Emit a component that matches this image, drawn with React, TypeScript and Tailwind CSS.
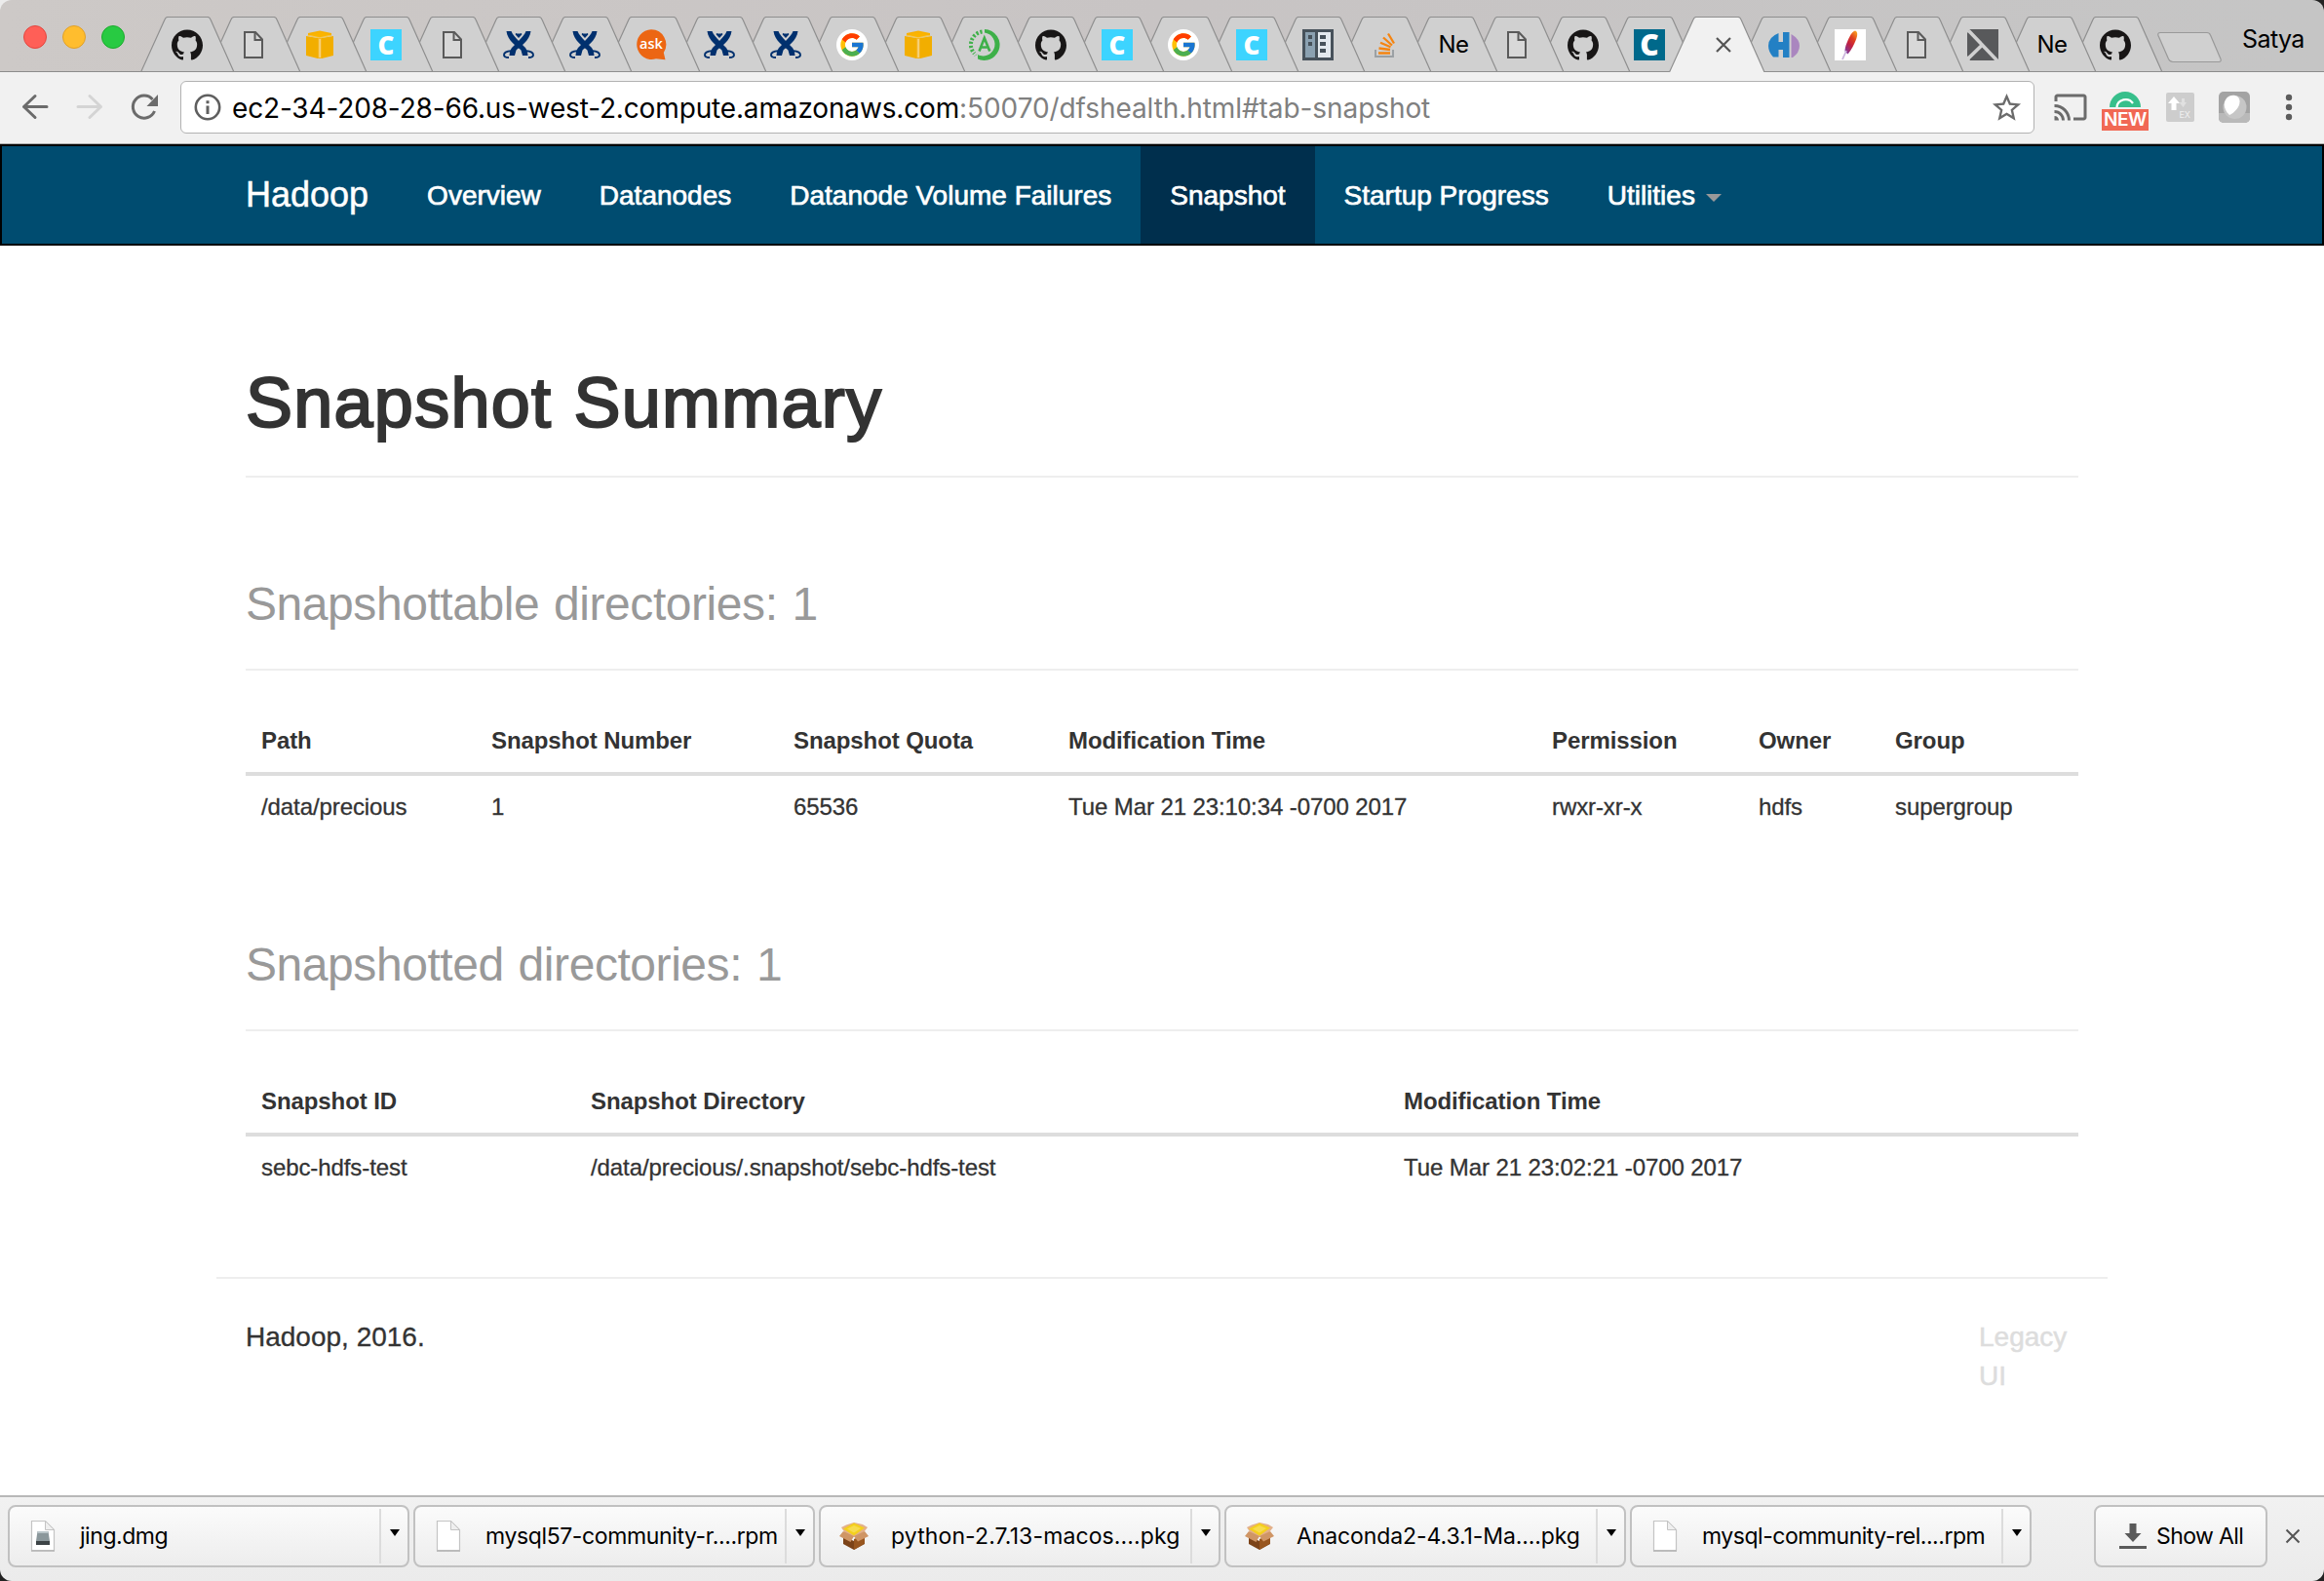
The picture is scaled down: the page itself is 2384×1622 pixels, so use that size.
import { type ReactNode } from "react";
import { SiGithub } from "react-icons/si";
import { FcGoogle } from "react-icons/fc";
import { MdCast, MdStarBorder } from "react-icons/md";

type TabKind =
  | "github" | "doc" | "aws" | "c" | "atlas" | "ask" | "google" | "ana" | "panel"
  | "stack" | "ne" | "cteal" | "active" | "hi" | "feather" | "cross";

const tabs: TabKind[] = [
  "github", "doc", "aws", "c", "doc", "atlas", "atlas", "ask", "atlas", "atlas",
  "google", "aws", "ana", "github", "c", "google", "c", "panel", "stack", "ne",
  "doc", "github", "cteal", "active", "hi", "feather", "doc", "cross", "ne", "github",
];

function Svg({ children }: { children: ReactNode }) {
  return (
    <svg viewBox="0 0 32 32" className="size-8">
      {children}
    </svg>
  );
}

function Favicon({ kind }: { kind: TabKind }) {
  switch (kind) {
    case "github":
      return <SiGithub className="size-8 text-[#181616]" />;
    case "doc":
      return (
        <Svg>
          <path d="M7 3h11l7 7.500v18.500H7z" fill="#d8d8d8" stroke="#5a5a5a" strokeWidth="2" />
          <path d="M17.500 3v8H25" fill="none" stroke="#5a5a5a" strokeWidth="2" />
        </Svg>
      );
    case "aws":
      return (
        <Svg>
          <path d="M2 7l12 2v21L2 27zM30 7L18 9v21l12-3z" fill="#f2ae00" />
          <path d="M14 9h4v21h-4z" fill="#f4b420" />
          <path d="M15.200 10h1.800v19h-1.800z" fill="#f6d27c" />
          <path d="M4 4l12-2.500L28 4v2.500L16 9 4 6.500z" fill="#f9b100" />
          <path d="M2.500 6.500L16 5.200 29.500 6.500 16 9.200z" fill="#f4c95a" />
          <path d="M6 6L16 3l10 3-10 2.200z" fill="#fbb400" />
        </Svg>
      );
    case "c":
      return (
        <span className="flex size-8 items-center justify-center bg-[#3dd4ff] font-['Open_Sans',sans-serif] text-[26px] leading-8 font-extrabold text-white">
          C
        </span>
      );
    case "cteal":
      return (
        <span className="flex size-8 items-center justify-center bg-[#00698b] font-['Open_Sans',sans-serif] text-[30px] leading-8 font-extrabold text-white">
          C
        </span>
      );
    case "atlas":
      return (
        <Svg>
          <g fill="#00306e">
            <path d="M3.500 2H8.500C9.500 5 13 9 16.500 12.500L23 19c1.500 2 2.300 5 2.500 8h-5.500l-1.500-5.500C15 18 4.500 12 3.500 2z" />
            <path d="M28.500 2H23.500C22.500 5 19 9 15.500 12.500L9 19c-1.500 2-2.300 5-2.500 8H12l1.500-5.500C17 18 27.500 12 28.500 2z" />
            <path d="M13 4c2 .7 4 .7 6 0l.3 1.500L16 9l-3.300-3.500z" />
          </g>
          <g fill="none" stroke="#00306e" strokeWidth="1.900">
            <path d="M8.500 22.200C4 22.500 1 24.300 1 26.200S3 29 6 29" />
            <path d="M23.500 22.200C28 22.500 31 24.300 31 26.200S29 29 26 29" />
          </g>
        </Svg>
      );
    case "ask":
      return (
        <span className="relative flex size-8 items-center justify-center">
          <svg viewBox="0 0 32 32" className="absolute inset-0 size-8">
            <path d="M16 .2a15 15.400 0 1 0 5 30l9.500 1-1.700-7.200A15 15.400 0 0 0 16 .2z" fill="#ec6613" />
          </svg>
          <span className="relative -top-px font-['Open_Sans',sans-serif] text-[14.500px] leading-8 font-semibold text-white">
            ask
          </span>
        </span>
      );
    case "google":
      return (
        <span className="flex size-8 items-center justify-center rounded-full bg-white">
          <FcGoogle className="size-[28px]" />
        </span>
      );
    case "ana":
      return (
        <Svg>
          <path d="M16 0A16 16 0 1 1 5 28l3-2.500A12 12 0 1 0 16 3.500z" fill="#3eb049" />
          <path d="M5 28l4-2.500v8H0z" fill="#d0d0d0" />
          <path d="M13.500 2.500A13.500 13.500 0 0 0 5.500 25" fill="none" stroke="#3eb049" strokeWidth="4" strokeDasharray="2.200 1.800" />
          <path d="M10.500 22.500L15.800 9l5.500 13.500M12.500 18.500h7" fill="none" stroke="#3eb049" strokeWidth="2.600" />
        </Svg>
      );
    case "panel":
      return (
        <Svg>
          <path d="M0 0h32v32H0z" fill="#47525b" />
          <path d="M3 3h10v26H3z" fill="#8ba1b1" />
          <path d="M16 3h13v26H16z" fill="#e3e9ee" />
          <path d="M6 6h4v4H6zM6 13h4v4H6zM18 6h6v4h-6zM18 13h6v4h-6zM18 20h6v4h-6z" fill="#47525b" />
        </Svg>
      );
    case "stack":
      return (
        <Svg>
          <path d="M7 21v7h18v-7" fill="none" stroke="#9a9fa3" strokeWidth="1.900" />
          <path d="M10 24.500h12M10.500 19.500l11.500 1.500M12 13.800l10.500 4.500M15 8.500l9 8M20 4.500l6 10" fill="none" stroke="#f58410" strokeWidth="2.300" />
        </Svg>
      );
    case "ne":
      return (
        <span className="relative left-[4.5px] w-[34px] overflow-hidden font-[Inter,sans-serif] text-[24px] leading-8 tracking-[-0.7px] whitespace-nowrap text-black">
          Ne
        </span>
      );
    case "active":
      return (
        <svg viewBox="0 0 32 32" className="relative left-[8px] size-8">
          <path d="M9 9l14 14M23 9L9 23" stroke="#555" strokeWidth="2.200" fill="none" />
        </svg>
      );
    case "hi":
      return (
        <Svg>
          <path d="M10.500 4v9H15V3h6.500v26H15v-8h-4.500v7.500H5Q0 23 0 17 0 8 10.500 4z" fill="#2380c4" />
          <path d="M23.500 5Q32 10 32 17t-7 12h-1.500z" fill="#aa86bf" />
        </Svg>
      );
    case "feather":
      return (
        <svg viewBox="0 0 32 32" className="size-8 bg-white">
          <defs>
            <linearGradient id="plume" x1="0.800" y1="0" x2="0.200" y2="1">
              <stop offset="0" stopColor="#f79a22" />
              <stop offset="0.300" stopColor="#e0401f" />
              <stop offset="0.600" stopColor="#c3203f" />
              <stop offset="1" stopColor="#7f3a9c" />
            </linearGradient>
          </defs>
          <path d="M21 1.500c3 1 2.500 5 1 9-2 5-5 11-8.500 15l-3-3c0-5 3-11 5-15 1.500-3 3.500-5.500 5.500-6z" fill="url(#plume)" />
          <path d="M12 22L8 31" stroke="#cbb5dd" strokeWidth="1.800" />
        </svg>
      );
    case "cross":
      return (
        <Svg>
          <path d="M0 0h32v32H0z" fill="#58595b" />
          <path d="M1.500 1.500L32 33.500M0 31l15.500-15" stroke="#d0d0d0" strokeWidth="3.600" fill="none" />
          <path d="M0 27l3 5H0zM0 0h3L0 4z" fill="#d0d0d0" />
        </Svg>
      );
  }
}

function Tab({ kind, index }: { kind: TabKind; index: number }) {
  const active = kind === "active";
  const extra = index % 8 === 7 ? 2 : 0;
  const outline = `M.5 57L25 3Q26 .5 28 .5H${69 + extra}Q${71 + extra} .5 ${72 + extra} 3L${96 + extra} 57`;
  return (
    <div className="relative h-[57px] shrink-0" style={{ width: 68 + extra, zIndex: active ? 60 : 40 - index }}>
      <svg viewBox="0 0 100 57" className="absolute top-0 left-[-14px] h-[57px] w-[100px]">
        <path d={outline} fill={active ? "#f1f1f1" : "#d0d0d0"} />
        <path d={active ? outline : `${outline}M0 56.500H${96 + extra}`} fill="none" stroke="#8f8f8f" strokeWidth="1.200" />
      </svg>
      <div className="relative mt-[13px] flex h-8 w-[68px] items-center justify-center">
        <Favicon kind={kind} />
      </div>
    </div>
  );
}

function TabStrip() {
  return (
    <div className="flex h-[74px] shrink-0 items-start border-b border-[#8c8c8c] bg-linear-to-r from-[#cdc9c7] via-[#c8c4c4] to-[#c5c5c5]">
      <div className="flex w-[158px] shrink-0 gap-4 pt-[26px] pl-6">
        <span className="size-6 rounded-full border border-[#e2463f] bg-[#ff5f57]" />
        <span className="size-6 rounded-full border border-[#e0a028] bg-[#ffbd2e]" />
        <span className="size-6 rounded-full border border-[#1bab2c] bg-[#28ca42]" />
      </div>
      <div className="relative flex pt-[17px]">
        {tabs.map((kind, i) => (
          <Tab key={i} kind={kind} index={i} />
        ))}
      </div>
      <svg viewBox="0 0 68 34" className="mt-[32px] ml-[8px] h-[34px] w-[68px] shrink-0">
        <path d="M4 1.500H52Q54.500 1.500 55.500 4L66 28.500Q67 31.500 64 31.500H17Q14 31.500 12.500 28.500L2 4.500Q1 1.500 4 1.500z" fill="#d0d0d0" stroke="#999" strokeWidth="1.200" />
      </svg>
      <span className="mt-[22px] ml-[20px] font-[Inter,sans-serif] text-[25px] leading-9 tracking-[-0.6px] text-black">Satya</span>
    </div>
  );
}

function Toolbar() {
  return (
    <div className="flex h-[74px] shrink-0 items-start border-b border-[#a9a9a9] bg-[#f1f1f1]">
      <svg viewBox="0 0 185 74" className="h-[74px] w-[185px] shrink-0">
        <g fill="none" strokeWidth="3" strokeLinecap="round" strokeLinejoin="round">
          <path d="M48 35.500H24.500M36 24.500L24.500 35.500 36 46.500" stroke="#6b6b6b" />
          <path d="M80 35.500h23.500M92 24.500l11.500 11L92 46.500" stroke="#d4d4d4" />
          <path d="M158.500 40a11.500 11.500 0 1 1-2-12" stroke="#6b6b6b" strokeLinecap="butt" />
        </g>
        <path d="M162 23v12h-11.500z" fill="#6b6b6b" />
      </svg>
      <div className="mt-[9px] flex h-[54px] w-[1902px] shrink-0 items-center rounded-[6px] border border-[#b2b2b2] bg-white">
        <svg viewBox="0 0 28 28" className="ml-[13px] size-7 shrink-0">
          <circle cx="14" cy="14" r="12.200" fill="none" stroke="#5f5f5f" strokeWidth="2.600" />
          <path d="M12.500 12.500h3v8.500h-3zM12.500 7.200h3v3h-3z" fill="#5f5f5f" />
        </svg>
        <div className="ml-[11px] flex-1 pt-0.5 font-[Inter,sans-serif] text-[28px] leading-10 tracking-[-0.080px] whitespace-nowrap text-[#808080]">
          <span className="tracking-[-0.150px] text-black">ec2-34-208-28-66.us-west-2.compute.amazonaws.com</span>
          <span>:50070/dfshealth.html#tab-snapshot</span>
        </div>
        <MdStarBorder className="mr-[10px] size-[35px] text-[#6b6b6b]" />
      </div>
      <MdCast className="mt-[18px] ml-[19px] size-[36px] shrink-0 text-[#6b6b6b]" />
      <div className="mt-5 ml-[14px] flex w-12 shrink-0 flex-col items-center">
        <svg viewBox="0 0 32 16" className="h-4 w-8">
          <path d="M0 16a16 16 0 0 1 32 0z" fill="#37bf8b" />
          <path d="M7.500 16a9 8.500 0 0 1 16.500-4" fill="none" stroke="#fff" strokeWidth="2.200" />
        </svg>
        <span className="mt-0.5 flex h-[22px] w-12 items-center justify-center bg-[#f16854] font-[Inter,sans-serif] text-[19px] leading-[22px] font-semibold tracking-[-0.5px] text-white">
          NEW
        </span>
      </div>
      <span className="relative mt-[21px] ml-[18px] h-[30px] w-[29px] shrink-0 rounded-[2px] bg-[#cdcdcd]">
        <svg viewBox="0 0 29 30" className="absolute inset-0 h-[30px] w-[29px]">
          <path d="M8 4l6 7h-3.500v7h-5v-7H2z" fill="#fff" />
          <path d="M17.500 15l-4-5h2.500V6h3v4H21z" fill="#e0e0e0" />
        </svg>
        <span className="absolute right-1 bottom-0.5 font-[Inter,sans-serif] text-[9px] leading-[10px] text-[#f0f0f0]">EX</span>
      </span>
      <svg viewBox="0 0 32 32" className="mt-5 ml-[25px] size-8 shrink-0">
        <rect width="32" height="32" rx="5" fill="#a3a3a3" />
        <path d="M0 22h32v5a5 5 0 0 1-5 5H5a5 5 0 0 1-5-5z" fill="#b9b9b9" />
        <circle cx="16.500" cy="16" r="12" fill="#c6c6c6" />
        <path d="M11 4.500c5-2 10 0 10.500 5 .5 6-5 12-10.500 14.500C4 18 4 8 11 4.500z" fill="#fff" />
      </svg>
      <svg viewBox="0 0 8 28" className="mt-[22px] ml-9 h-7 w-2 shrink-0 fill-[#5c5c5c]">
        <circle cx="4" cy="4" r="3.200" />
        <circle cx="4" cy="14" r="3.200" />
        <circle cx="4" cy="24" r="3.200" />
      </svg>
    </div>
  );
}

const navItems = ["Overview", "Datanodes", "Datanode Volume Failures", "Snapshot", "Startup Progress", "Utilities"];

function Navbar() {
  return (
    <nav className="flex h-[104px] shrink-0 border-2 border-black bg-[#004c70] pl-[220px] text-[28px] leading-10 whitespace-nowrap text-white [-webkit-text-stroke:0.7px_#fff]">
      <a className="px-[30px] py-[30px] text-[36px] [-webkit-text-stroke:0.5px_#fff]">Hadoop</a>
      {navItems.map((item) => (
        <a key={item} className={item === "Snapshot" ? "bg-[#002f4d] px-[30px] pt-[31px]" : "px-[30px] pt-[31px]"}>
          {item}
          {item === "Utilities" && (
            <span className="ml-[11px] inline-block border-x-8 border-t-8 border-x-transparent border-t-[#999] align-middle" />
          )}
        </a>
      ))}
    </nav>
  );
}

function DataTable({ widths, head, row }: { widths: number[]; head: string[]; row: string[] }) {
  return (
    <table className="mt-10 w-[1880px] table-fixed border-collapse text-left text-[24px] leading-[34px] tracking-[-0.090px]">
      <colgroup>
        {widths.map((w, i) => (
          <col key={i} style={{ width: w }} />
        ))}
      </colgroup>
      <thead>
        <tr className="h-16">
          {head.map((h) => (
            <th key={h} className="px-4 pt-[15px] pb-[15px] align-top font-bold">{h}</th>
          ))}
        </tr>
      </thead>
      <tbody>
        <tr className="h-[68px] border-t-4 border-[#ddd]">
          {row.map((c) => (
            <td key={c} className="px-4 pt-[15px] align-top [-webkit-text-stroke:0.3px_#333]">{c}</td>
          ))}
        </tr>
      </tbody>
    </table>
  );
}

function SectionHeading({ children }: { children: ReactNode }) {
  return (
    <h3 className="h-[95px] border-b-2 border-[#eee] text-[48px] leading-[53px] tracking-[-0.440px] [word-spacing:2px] text-[#999]">{children}</h3>
  );
}

function Page() {
  return (
    <main className="flex flex-1 flex-col bg-white px-[252px] text-[#333]">
      <h1 className="mt-[122px] h-[116px] border-b-2 border-[#eee] text-[72px] leading-[79px] tracking-[1.25px] [word-spacing:1px] [-webkit-text-stroke:2.2px_#333]">
        Snapshot Summary
      </h1>
      <section className="mt-[103px]">
        <SectionHeading>Snapshottable directories: 1</SectionHeading>
        <DataTable
          widths={[236, 310, 282, 496, 212, 140, 204]}
          head={["Path", "Snapshot Number", "Snapshot Quota", "Modification Time", "Permission", "Owner", "Group"]}
          row={["/data/precious", "1", "65536", "Tue Mar 21 23:10:34 -0700 2017", "rwxr-xr-x", "hdfs", "supergroup"]}
        />
      </section>
      <section className="mt-[101px]">
        <SectionHeading>Snapshotted directories: 1</SectionHeading>
        <DataTable
          widths={[338, 834, 708]}
          head={["Snapshot ID", "Snapshot Directory", "Modification Time"]}
          row={["sebc-hdfs-test", "/data/precious/.snapshot/sebc-hdfs-test", "Tue Mar 21 23:02:21 -0700 2017"]}
        />
      </section>
      <footer className="-mx-[30px] mt-[78px] flex justify-between border-t-2 border-[#eee] px-[30px] pt-10 text-[28px] leading-10">
        <span className="[-webkit-text-stroke:0.3px_#333]">Hadoop, 2016.</span>
        <span className="w-[102px] text-[#ddd] [-webkit-text-stroke:0.5px_#ddd]">Legacy UI</span>
      </footer>
    </main>
  );
}

function FileIcon({ disk = false }: { disk?: boolean }) {
  return (
    <svg viewBox="0 0 32 34" className="h-[34px] w-8">
      <path d="M4.500 1.500h14l9 9v21h-23z" fill="#fff" stroke="#c4c4c4" strokeWidth="1.200" />
      <path d="M4 32.200h24" stroke="#b0b0b0" strokeWidth="1.200" />
      <path d="M18.500 1.500v9h9z" fill="#efefef" stroke="#c4c4c4" strokeWidth="1" />
      {disk && (
        <>
          <path d="M10.500 12h11l1.500 10v4H9v-4z" fill="#8b979b" />
          <path d="M10.500 12h11v2h-11z" fill="#b9c4c8" />
          <path d="M9 22h14v4H9z" fill="#3d4446" />
        </>
      )}
    </svg>
  );
}

function PackageIcon() {
  return (
    <svg viewBox="0 0 32 34" className="h-[34px] w-8">
      <path d="M5 17l11 5 11-5v8l-11 6-11-6z" fill="#7c4318" />
      <path d="M16 20l11-5v9.500L16 31z" fill="#98561f" />
      <path d="M3 8l5-2.500L16 3l9 2 5 3-4 5-10 5-9-4z" fill="#e3b08a" />
      <path d="M5 9.500L16 3.500l11 5-11 8z" fill="#f4cf1d" />
      <path d="M9 9.500L16 6l7 3-7 4.500z" fill="#f7dc4e" />
      <path d="M5 12l11 5-3.500 6L1 17zM27 12l-11 5 4 5.500L31 17z" fill="#cf9565" />
    </svg>
  );
}

const downloads: { name: string; icon: ReactNode; spacing: string }[] = [
  { name: "jing.dmg", icon: <FileIcon disk />, spacing: "tracking-[-0.450px]" },
  { name: "mysql57-community-r....rpm", icon: <FileIcon />, spacing: "tracking-[-0.380px]" },
  { name: "python-2.7.13-macos....pkg", icon: <PackageIcon />, spacing: "tracking-[0.120px]" },
  { name: "Anaconda2-4.3.1-Ma....pkg", icon: <PackageIcon />, spacing: "tracking-[-0.100px]" },
  { name: "mysql-community-rel....rpm", icon: <FileIcon />, spacing: "tracking-[-0.480px]" },
];

function DownloadShelf() {
  return (
    <div className="flex h-[88px] shrink-0 items-start border-t-2 border-[#b8b8b8] bg-linear-to-b from-[#f1f1f1] to-[#ebebeb] px-2 pt-2 font-[Inter,sans-serif] text-[23px] text-black">
      <div className="flex gap-1">
        {downloads.map((d) => (
          <div key={d.name} className="flex h-16 w-[412px] rounded-[8px] border-2 border-[#c1c1c1] bg-linear-to-b from-[#fbfbfb] to-[#ededed]">
            <div className="flex w-[379px] items-center pl-[18px] whitespace-nowrap">
              {d.icon}
              <span className={`ml-[22px] leading-8 ${d.spacing}`}>{d.name}</span>
            </div>
            <div className="my-0.5 flex w-[29px] justify-center border-l-2 border-[#dcdcdc] pt-[21px]">
              <span className="size-0 border-x-5 border-t-7 border-x-transparent border-t-black" />
            </div>
          </div>
        ))}
      </div>
      <div className="ml-[64px] flex h-16 w-[178px] shrink-0 items-center rounded-[8px] border-2 border-[#c1c1c1] bg-linear-to-b from-[#fbfbfb] to-[#ededed] pl-6 whitespace-nowrap">
        <svg viewBox="0 0 28 28" className="size-7 fill-[#5a5a5a]">
          <path d="M10.500 1h7v10h5L14 20 5.500 11h5zM0 24h28v3H0z" />
        </svg>
        <span className="ml-2.5 tracking-[-0.6px]">Show All</span>
      </div>
      <svg viewBox="0 0 16 16" className="mt-6 ml-[18px] size-4 shrink-0">
        <path d="M1.500 1.500l13 13M14.500 1.500l-13 13" stroke="#555" strokeWidth="2" />
      </svg>
    </div>
  );
}

export default function App() {
  return (
    <div className="relative h-[1622px] w-[2384px] overflow-hidden bg-[#222]">
      <div className="absolute top-0 left-0 size-4 bg-[#ececec]" />
      <div className="relative flex h-full flex-col overflow-hidden rounded-[12px] font-['Liberation_Sans',Arial,sans-serif]">
        <TabStrip />
        <Toolbar />
        <Navbar />
        <Page />
        <DownloadShelf />
      </div>
    </div>
  );
}
